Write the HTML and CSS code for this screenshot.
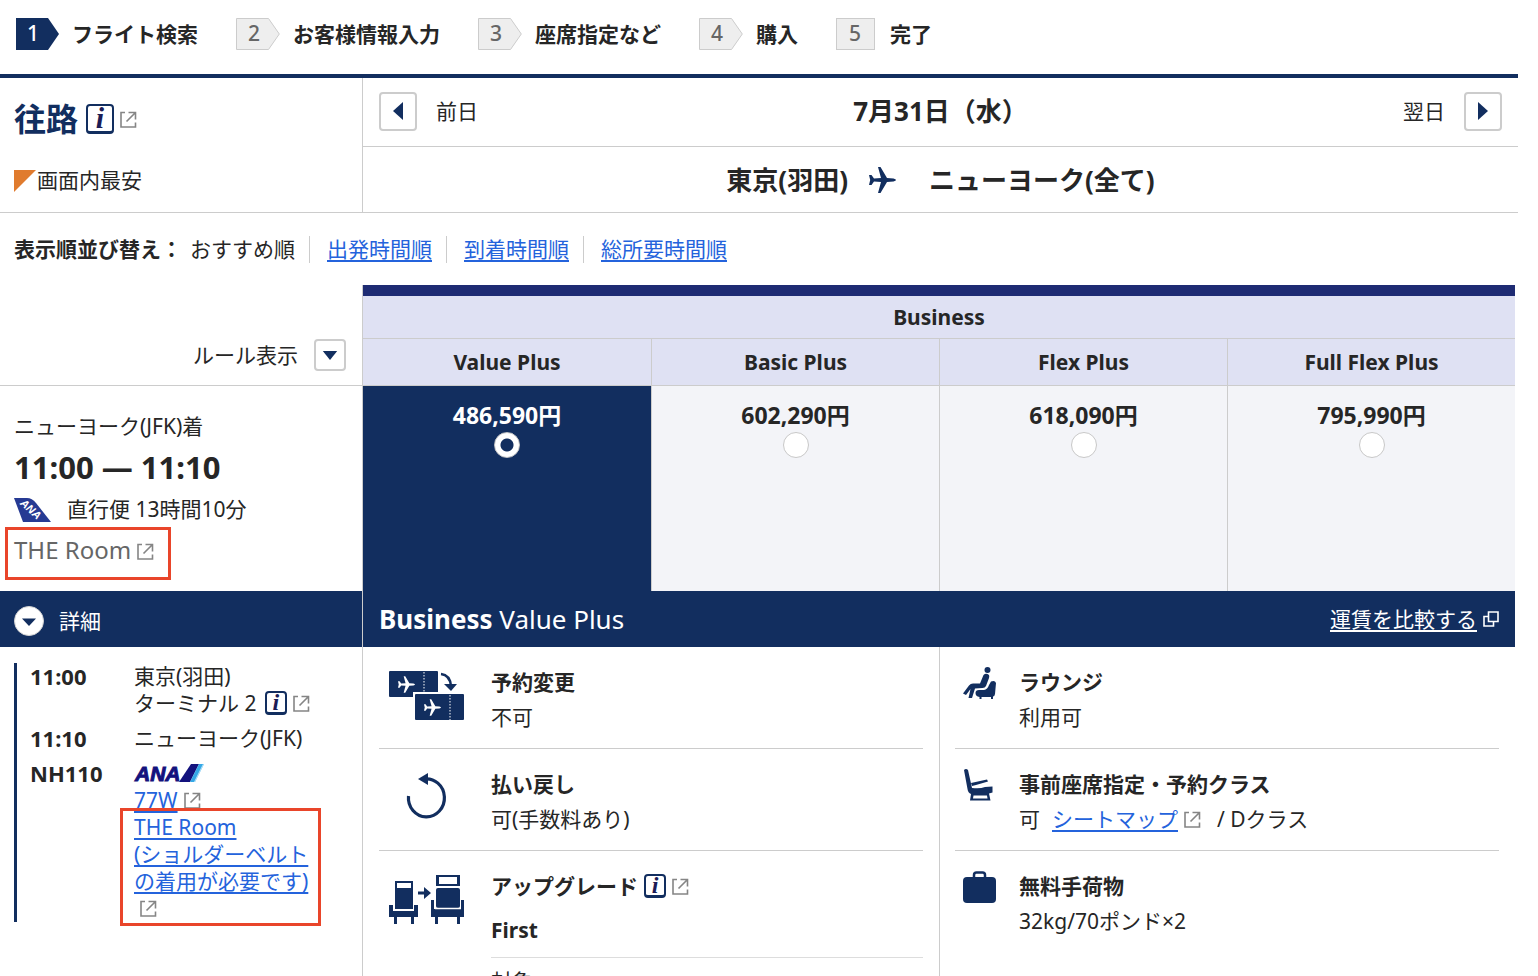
FILE: index.html
```html
<!DOCTYPE html>
<html lang="ja">
<head>
<meta charset="utf-8">
<meta name="viewport" content="width=device-width, initial-scale=1">
<title>フライト検索</title>
<link rel="stylesheet" href="styles.css">
</head>
<body>
<svg class="sprite" aria-hidden="true">
  <symbol id="ext" viewBox="0 0 17 17"><path d="M5 1.500H1V16H15.500V11.500M8.500 1.500H15.500V8.500M15 2L6.500 10.500" fill="none" stroke="#858585" stroke-width="1.600"/></symbol>
  <symbol id="plane" viewBox="0 0 27 26"><path d="M9 0H11.500L18 11L24.500 11.400Q27 12.300 27 13Q27 13.700 24.500 14.600L18 15L11.500 26H9L12 15L5 14.500L2.500 18H0L1.200 13L0 8H2.500L5 11.500L12 11Z"/></symbol>
  <symbol id="step" viewBox="0 0 44 32"><path d="M.5 .5H32.500L43.300 16L32.500 31.500H.5Z" fill="#eee" stroke="#ccc"/></symbol>
</svg>
<div class="page">
  <header>
    <ol class="steps">
      <li class="step"><svg class="step-mark first" viewBox="0 0 43 32"><path d="M0 0H32L43 16L32 32H0Z" fill="#122e5f"/><text x="17" y="23" fill="#fff">1</text></svg>フライト検索</li>
      <li class="step"><svg class="step-mark" viewBox="0 0 44 32"><use href="#step"/><text x="18" y="23">2</text></svg>お客様情報入力</li>
      <li class="step"><svg class="step-mark" viewBox="0 0 44 32"><use href="#step"/><text x="18" y="23">3</text></svg>座席指定など</li>
      <li class="step"><svg class="step-mark" viewBox="0 0 44 32"><use href="#step"/><text x="18" y="23">4</text></svg>購入</li>
      <li class="step"><svg class="step-mark last" viewBox="0 0 39 32"><rect x=".5" y=".5" width="38" height="31" fill="#eee" stroke="#ccc"/><text x="19" y="23">5</text></svg>完了</li>
    </ol>
  </header>

  <section class="route">
    <div class="route-side">
      <h1 class="direction">往路<a class="info info-large" href="#" aria-label="案内">i</a><svg class="ext"><use href="#ext"/></svg></h1>
      <p class="cheapest"><svg class="corner" viewBox="0 0 22 22"><path d="M0 0H22L0 22Z" fill="#e07b2e"/></svg>画面内最安</p>
    </div>
    <div class="route-main">
      <div class="dates">
        <div class="day"><button class="square" aria-label="前日"><svg viewBox="0 0 10 18"><path d="M10 0V18L0 9Z"/></svg></button>前日</div>
        <h2 class="headline">7月31日（水）</h2>
        <div class="day next">翌日<button class="square" aria-label="翌日"><svg viewBox="0 0 10 18"><path d="M0 0V18L10 9Z"/></svg></button></div>
      </div>
      <h2 class="headline cities">東京(羽田)<svg class="plane"><use href="#plane"/></svg>ニューヨーク(全て)</h2>
    </div>
  </section>

  <nav class="sort">
    <b>表示順並び替え：</b>
    <ul class="sort-list">
      <li>おすすめ順</li>
      <li><a href="#">出発時間順</a></li>
      <li><a href="#">到着時間順</a></li>
      <li><a href="#">総所要時間順</a></li>
    </ul>
  </nav>

  <main class="results">
    <table class="fares">
      <colgroup><col class="col-side"><col><col><col><col></colgroup>
      <thead>
        <tr>
          <td class="side rules" rowspan="2"><div class="rules-row">ルール表示<button class="square small" aria-label="ルール表示"><svg viewBox="0 0 16 10"><path d="M0 0H16L8 10Z"/></svg></button></div></td>
          <th class="cabin" colspan="4">Business</th>
        </tr>
        <tr><th class="fare">Value Plus</th><th class="fare">Basic Plus</th><th class="fare">Flex Plus</th><th class="fare">Full Flex Plus</th></tr>
      </thead>
      <tbody>
        <tr>
          <td class="side flight">
            <div>ニューヨーク(JFK)着</div>
            <div class="times">11:00 — 11:10</div>
            <div class="carrier"><svg class="tail" viewBox="0 0 37 24"><path d="M0 0H13Q18 0 22 5L37 24H9Z" fill="#263a93"/><text x="17" y="15" transform="rotate(42 17 11)">ANA</text></svg>直行便 13時間10分</div>
            <div class="room">THE Room<svg class="ext"><use href="#ext"/></svg><span class="mark mark-room"></span></div>
          </td>
          <td class="price selected"><label>486,590円<input type="radio" name="fare" checked></label></td>
          <td class="price"><label>602,290円<input type="radio" name="fare"></label></td>
          <td class="price"><label>618,090円<input type="radio" name="fare"></label></td>
          <td class="price"><label>795,990円<input type="radio" name="fare"></label></td>
        </tr>
      </tbody>
    </table>

    <div class="split bar">
      <div class="side bar-side"><button class="toggle"><svg viewBox="0 0 30 30"><circle cx="15" cy="15" r="14.500" fill="#fff" stroke="#d2d2d2"/><path d="M8 12.500H22L15 20Z" fill="#122e5f"/></svg>詳細</button></div>
      <div class="bar-main">
        <h3 class="bar-title"><b>Business</b> Value Plus</h3>
        <a class="compare" href="#"><span>運賃を比較する</span><svg viewBox="0 0 16 16"><path d="M5.500 1H15V10.500H5.500ZM5 5.500H1V15H10.500V11" fill="none" stroke="#fff" stroke-width="1.600"/></svg></a>
      </div>
    </div>

    <div class="split">
      <div class="side detail-side">
        <dl class="legs">
          <dt>11:00</dt>
          <dd>東京(羽田)<br>ターミナル 2 <a class="info" href="#" aria-label="案内">i</a><svg class="ext"><use href="#ext"/></svg></dd>
          <dt>11:10</dt>
          <dd>ニューヨーク(JFK)</dd>
          <dt>NH110</dt>
          <dd>
            <div class="logo-line"><svg class="logo" viewBox="0 0 70 19"><text x="1" y="17">ANA</text><path d="M45 18L57 0H65L56 18Z" fill="#13127d"/><path d="M56 18L65 0H70L61 18Z" fill="#35a8e6"/><path d="M60 18L69 0H70L61 18Z" fill="#bfe6fa"/></svg></div>
            <div><a href="#">77W</a><svg class="ext"><use href="#ext"/></svg></div>
            <div class="belt"><a href="#">THE Room<br>(ショルダーベルト<br>の着用が必要です)</a><br><svg class="ext"><use href="#ext"/></svg><span class="mark mark-belt"></span></div>
          </dd>
        </dl>
      </div>
      <div class="benefits">
        <ul class="benefit-list wide">
          <li class="benefit">
            <div class="icon"><svg width="75" height="49" viewBox="0 0 75 49"><g fill="#122e5f"><path d="M1 0H48Q49 0 49 1V21H24V26H1Q0 26 0 25V1Q0 0 1 0Z"/><rect x="26" y="23" width="49" height="26" rx="1"/><path d="M55 13H68L62 20Z"/></g><path d="M52 3Q61 4 62 15" fill="none" stroke="#122e5f" stroke-width="2.500"/><path d="M35 1V21M61 24V49" stroke="#fff" stroke-dasharray="1.500 1.500"/><use href="#plane" x="9" y="5" width="17" height="17" fill="#fff"/><use href="#plane" x="35" y="28" width="17" height="17" fill="#fff"/></svg></div>
            <div><h4>予約変更</h4><p>不可</p></div>
          </li>
          <li class="benefit">
            <div class="icon"><svg width="75" height="46" viewBox="0 0 75 46"><path d="M19.500 23A18 19 0 1 0 35 6" fill="none" stroke="#122e5f" stroke-width="3.200"/><path d="M29 6L39 0V12Z" fill="#122e5f"/></svg></div>
            <div><h4>払い戻し</h4><p>可(手数料あり)</p></div>
          </li>
          <li class="benefit">
            <div class="icon"><svg width="75" height="49" viewBox="0 0 75 49"><g fill="#122e5f"><path fill-rule="evenodd" d="M6 6H24V34H6ZM8 8H22V13H8Z"/><path d="M0 30H4V36H25V30H29V42H25V49H22V42H8V49H5V42H0Z"/><path fill-rule="evenodd" d="M47 0H71V11H47ZM50 2H68V9H50Z"/><rect x="47" y="13" width="24" height="20" rx="2"/><path d="M42 25H45V34H72V25H75V42H71V49H68V42H49V49H46V42H42Z"/><path d="M29 16.500H35V12L42 18L35 24V19.500H29Z"/></g><path d="M5 35H25M46 33.500H72" stroke="#fff" stroke-width="1.500"/></svg></div>
            <div class="grow"><h4>アップグレード<a class="info" href="#" aria-label="案内">i</a><svg class="ext"><use href="#ext"/></svg></h4><h5 class="upgrade">First</h5><p class="target">対象</p></div>
          </li>
        </ul>
        <ul class="benefit-list narrow">
          <li class="benefit">
            <div class="icon"><svg width="33" height="32" viewBox="0 0 33 32"><g fill="#122e5f"><circle cx="24.500" cy="3" r="3"/><path d="M20.500 8Q23 5.500 26 8Q26.500 9.500 26 11L23 19Q22 21 19.500 21L12 21.500L9 31H5.500L7.500 22L3 28L0 26.500L6 18.500Q7.500 16.500 10 16.500L17 16.500Z"/><path d="M28 14.500Q32 13 33 16L32 27Q31.500 29.500 30 29.500V32H28V30H18.500V32H16.500V30Q12.500 29.500 12.500 26Q12.500 23 16 23H21Q24.500 22.500 26 18Z"/></g></svg></div>
            <div><h4>ラウンジ</h4><p>利用可</p></div>
          </li>
          <li class="benefit">
            <div class="icon"><svg width="33" height="32" viewBox="0 0 33 32"><g fill="#122e5f"><path d="M1 1Q3 -1 5 1L9 19Q17 20 22 18L29.500 17.500V23.500L26 24.500L27.500 31.500H7L8 25Q5 24 4.500 20Z"/><path d="M8 14L24 10.500L25 12.500L13 16L9 17Z"/></g><path d="M10.500 26.500H24L24.500 29.500H10Z" fill="#fff"/></svg></div>
            <div><h4>事前座席指定・予約クラス</h4><p class="seat">可<span><a href="#">シートマップ</a><svg class="ext"><use href="#ext"/></svg></span><span>/ Dクラス</span></p></div>
          </li>
          <li class="benefit">
            <div class="icon"><svg width="33" height="32" viewBox="0 0 33 32"><rect y="6" width="33" height="26" rx="4" fill="#122e5f"/><path d="M11 8V4Q11 1.500 13.500 1.500H19.500Q22 1.500 22 4V8" fill="none" stroke="#122e5f" stroke-width="2.500"/></svg></div>
            <div><h4>無料手荷物</h4><p>32kg/70ポンド×2</p></div>
          </li>
        </ul>
      </div>
    </div>
  </main>
</div>
</body>
</html>
```
FILE: styles.css
```css
:root {
  --navy: #122e5f;
  --line: #ccc;
  --link: #2463dc;
}

* {
  box-sizing: border-box;
}

body {
  margin: 0;
  background: #fff;
  color: #262626;
  font: 21px/27px "Noto Sans", "Noto Sans CJK JP", sans-serif;
}

h1, h2, h3, h4, h5, p, ul, ol, dl, dd {
  margin: 0;
  padding: 0;
  list-style: none;
}

a {
  color: var(--link);
  text-decoration-thickness: 2px;
  text-underline-offset: 3px;
}

button {
  font: inherit;
  color: inherit;
  padding: 0;
  cursor: pointer;
}

.sprite {
  position: absolute;
  width: 0;
  height: 0;
}

.page {
  margin-right: 20px;
}

/* Progress steps */
.steps {
  display: flex;
  gap: 38px;
  padding: 18px 16px 24px;
  border-bottom: 4px solid var(--navy);
}

.step {
  display: flex;
  align-items: center;
  gap: 13px;
  font-weight: 700;
  white-space: nowrap;
}

.step-mark {
  width: 44px;
  height: 32px;
  fill: #666;
  font-weight: 500;
  text-anchor: middle;
}

.step-mark.first {
  width: 43px;
}

.step-mark.last {
  width: 39px;
  margin-right: 2px;
}

/* Shared icons */
.ext {
  width: 17px;
  height: 17px;
  margin-left: 6px;
  vertical-align: -1px;
}

.info {
  display: inline-block;
  width: 22px;
  height: 24px;
  border: 2px solid var(--navy);
  border-bottom-width: 3px;
  border-radius: 4px;
  background: #fff;
  color: #1c1c56;
  font: italic 700 24px/18px "Liberation Serif", serif;
  text-align: center;
  text-decoration: none;
  vertical-align: 1px;
}

.legs .info {
  margin-left: 3px;
}

.info-large {
  width: 28px;
  height: 30px;
  margin-left: 8px;
  font-size: 30px;
  line-height: 24px;
}

.square {
  display: grid;
  place-items: center;
  width: 38px;
  height: 39px;
  border: 2px solid var(--line);
  border-radius: 4px;
  background: #fff;
  fill: var(--navy);
}

.square svg {
  width: 10px;
  height: 18px;
}

.square.small {
  width: 32px;
  height: 32px;
}

.square.small svg {
  width: 16px;
  height: 9px;
}

/* Route header */
.route,
.split {
  display: grid;
  grid-template-columns: 363px 1fr;
}

.route {
  border-bottom: 1px solid var(--line);
}

.route-side {
  padding: 21px 14px 18px;
  border-right: 1px solid var(--line);
}

.direction {
  display: flex;
  align-items: center;
  color: var(--navy);
  font-size: 32px;
  line-height: 40px;
}

.cheapest {
  display: flex;
  align-items: center;
  gap: 1px;
  margin-top: 28px;
}

.corner {
  width: 22px;
  height: 22px;
}

.dates {
  display: grid;
  grid-template-columns: 1fr auto 1fr;
  align-items: center;
  height: 69px;
  padding: 0 16px 2px;
  border-bottom: 1px solid var(--line);
}

.day {
  display: flex;
  align-items: center;
  gap: 19px;
}

.next {
  justify-content: flex-end;
}

.headline {
  font-size: 26px;
  line-height: 36px;
}

.cities {
  display: flex;
  justify-content: center;
  align-items: center;
  height: 65px;
}

.plane {
  width: 27px;
  height: 26px;
  margin: 0 33px 0 21px;
  fill: var(--navy);
}

/* Sort links */
.sort {
  display: flex;
  gap: 8px;
  padding: 23px 14px 22px;
}

.sort-list {
  display: flex;
}

.sort-list li + li {
  margin-left: 14px;
  padding-left: 17px;
  border-left: 1px solid var(--line);
}

/* Fare table */
.results {
  margin-right: 3px;
}

.fares {
  width: 100%;
  border-spacing: 0;
  table-layout: fixed;
}

.fares th,
.fares td {
  padding: 0;
}

.col-side {
  width: 363px;
}

.side {
  border-right: 1px solid var(--line);
}

.fares .rules {
  padding: 0 16px 14px 14px;
  border-bottom: 1px solid var(--line);
  vertical-align: bottom;
}

.rules-row {
  display: flex;
  justify-content: flex-end;
  align-items: center;
  gap: 16px;
}

.cabin {
  height: 54px;
  border-top: 11px solid #1e2b73;
  border-bottom: 1px solid var(--line);
  background: #dfe1f3;
}

.fare {
  height: 47px;
  border-bottom: 1px solid var(--line);
  background: #dfe1f3;
}

.fare + .fare,
.price + .price {
  border-left: 1px solid var(--line);
}

.fares .flight {
  padding: 27px 14px 25px;
  vertical-align: top;
}

.times {
  margin-top: 9px;
  font-size: 31px;
  font-weight: 700;
  line-height: 36px;
}

.carrier {
  display: flex;
  align-items: center;
  gap: 16px;
  margin-top: 11px;
}

.tail {
  width: 37px;
  height: 24px;
}

.tail text {
  fill: #fff;
  font: italic 700 11px "Liberation Sans", sans-serif;
  text-anchor: middle;
}

.room {
  position: relative;
  margin-top: 11px;
  color: #666;
  font-size: 24px;
  line-height: 32px;
}

.mark {
  position: absolute;
  border: 3px solid #e9452a;
  pointer-events: none;
}

.mark-room {
  top: -7px;
  left: -9px;
  width: 166px;
  height: 53px;
}

.mark-belt {
  top: -6px;
  left: -14px;
  width: 201px;
  height: 118px;
}

.fares .price {
  padding-top: 14px;
  background: #f3f4f8;
  font-size: 23px;
  font-weight: 700;
  line-height: 30px;
  text-align: center;
  vertical-align: top;
}

.fares .selected {
  background: var(--navy);
  color: #fff;
}

.price input {
  display: block;
  appearance: none;
  width: 26px;
  height: 26px;
  margin: 2px auto 0;
  border: 1px solid #c8c8c8;
  border-radius: 50%;
  background: #fff;
}

.price input:checked {
  background: radial-gradient(circle, var(--navy) 6px, #fff 7px);
}

/* Detail bar */
.bar > div {
  display: flex;
  align-items: center;
  min-height: 56px;
  background: var(--navy);
  color: #fff;
}

.bar-side {
  padding: 4px 14px 0;
}

.toggle {
  display: flex;
  align-items: center;
  gap: 15px;
  border: 0;
  background: none;
}

.toggle svg {
  width: 30px;
  height: 30px;
}

.bar-main {
  justify-content: space-between;
  padding: 0 16px;
}

.bar-title {
  font-size: 26px;
  font-weight: 400;
  line-height: 36px;
}

.compare {
  display: flex;
  align-items: center;
  gap: 6px;
  color: #fff;
  text-decoration: none;
}

.compare span {
  text-decoration: underline 2px;
  text-underline-offset: 3px;
}

.compare svg {
  width: 16px;
  height: 16px;
}

/* Flight legs */
.detail-side {
  padding: 16px 14px;
}

.legs {
  display: grid;
  grid-template-columns: 104px 1fr;
  row-gap: 8px;
  padding-left: 13px;
  border-left: 3px solid var(--navy);
}

.legs dt {
  font-size: 22px;
  font-weight: 700;
}

.logo-line {
  display: flex;
  align-items: center;
  height: 27px;
}

.logo {
  width: 70px;
  height: 19px;
  overflow: visible;
}

.logo text {
  fill: #13127d;
  stroke: #13127d;
  font: italic 700 21px "Liberation Sans", sans-serif;
}

.belt {
  position: relative;
}

/* Fare conditions */
.benefits {
  display: grid;
  grid-template-columns: 1fr 1fr;
}

.benefit-list {
  padding: 0 16px;
}

.narrow {
  padding-left: 15px;
  border-left: 1px solid var(--line);
}

.benefit {
  display: flex;
  padding: 20px 0 16px;
  line-height: 30px;
}

.benefit:not(:last-child) {
  border-bottom: 1px solid var(--line);
}

.benefit p {
  margin-top: 5px;
}

.icon {
  flex: none;
  line-height: 0;
}

.wide .icon {
  width: 112px;
  padding: 4px 10px 0;
}

.narrow .icon {
  width: 64px;
  padding-left: 8px;
}

.benefit h4,
.benefit h5 {
  font-size: 21px;
}

.benefit h4 .info {
  margin-left: 6px;
}

.grow {
  flex: 1;
}

.upgrade {
  margin-top: 14px;
  padding-bottom: 12px;
  border-bottom: 1px solid #ddd;
}

.benefit .target {
  margin-top: 8px;
}

.seat {
  display: flex;
  gap: 12px;
}

.seat span + span {
  margin-left: 4px;
}
```
